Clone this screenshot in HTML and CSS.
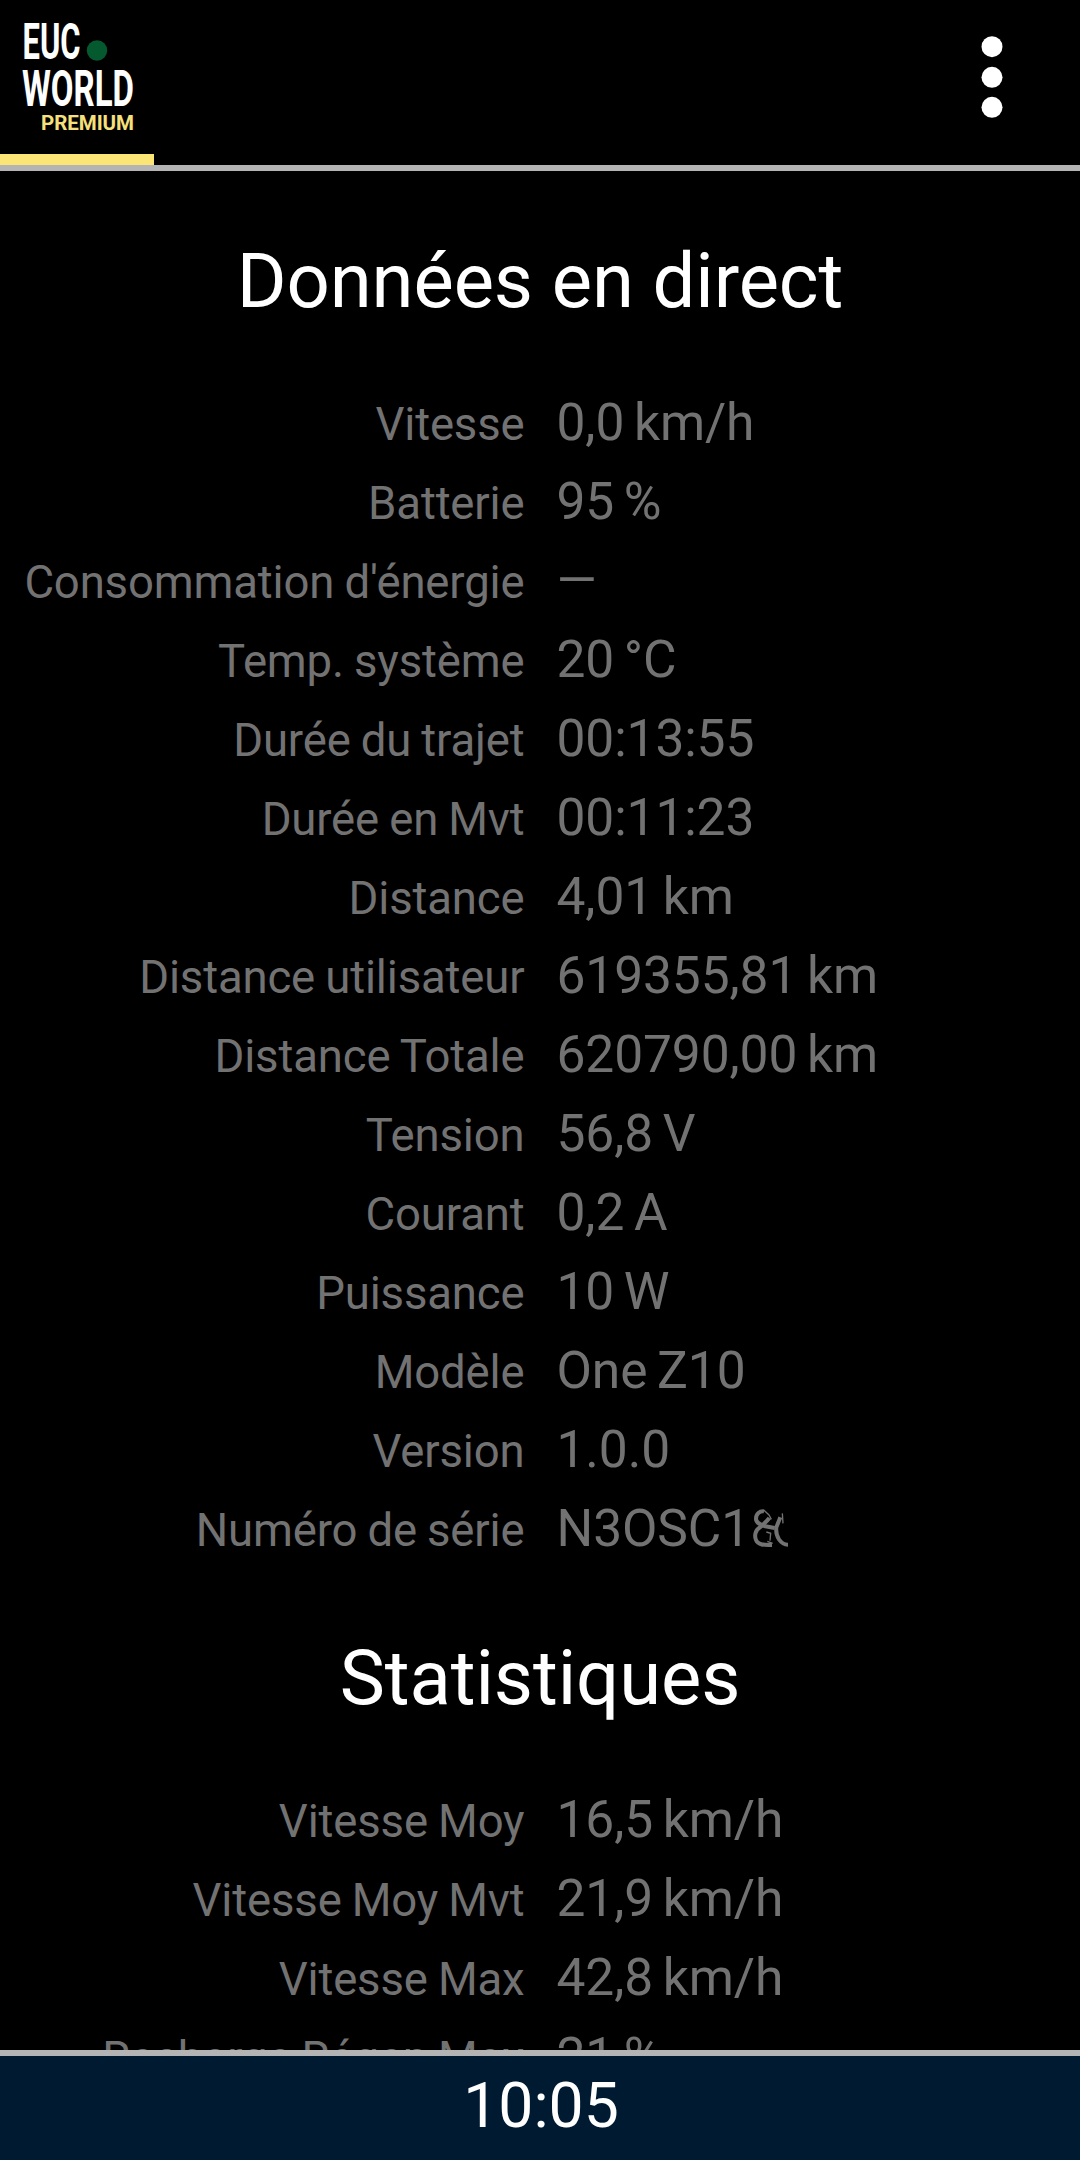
FILE: index.html
```
<!DOCTYPE html>
<html lang="fr">
<head>
    <meta charset="UTF-8">
    <title>EUC World</title>
    <link rel="stylesheet" href="styles.css">
</head>
<body>
<header class="topbar">
    <svg class="logo" width="154" height="154" viewBox="0 0 154 154">
        <text class="logo-name" x="22.5" y="59" textLength="58" lengthAdjust="spacingAndGlyphs">EUC</text>
        <circle cx="97" cy="50.5" r="10.2" fill="#05592f"/>
        <text class="logo-name" x="22" y="106" textLength="112" lengthAdjust="spacingAndGlyphs">WORLD</text>
        <text class="logo-premium" x="41" y="130" textLength="93" lengthAdjust="spacing">PREMIUM</text>
    </svg>
    <div class="tab-line"></div>
    <svg class="menu" width="24" height="84" viewBox="0 0 24 84">
        <circle cx="12" cy="11.7" r="10.5"/>
        <circle cx="12" cy="42.3" r="10.5"/>
        <circle cx="12" cy="72.3" r="10.5"/>
    </svg>
</header>
<main class="content">
    <h2>Données en direct</h2>
    <ul class="list">
        <li><span class="label">Vitesse</span><span class="value">0,0 km/h</span></li>
        <li><span class="label">Batterie</span><span class="value">95 %</span></li>
        <li><span class="label">Consommation d'énergie</span><span class="value">—</span></li>
        <li><span class="label">Temp. système</span><span class="value">20 °C</span></li>
        <li><span class="label">Durée du trajet</span><span class="value">00:13:55</span></li>
        <li><span class="label">Durée en Mvt</span><span class="value">00:11:23</span></li>
        <li><span class="label">Distance</span><span class="value">4,01 km</span></li>
        <li><span class="label">Distance utilisateur</span><span class="value">619355,81 km</span></li>
        <li><span class="label">Distance Totale</span><span class="value">620790,00 km</span></li>
        <li><span class="label">Tension</span><span class="value">56,8 V</span></li>
        <li><span class="label">Courant</span><span class="value">0,2 A</span></li>
        <li><span class="label">Puissance</span><span class="value">10 W</span></li>
        <li><span class="label">Modèle</span><span class="value">One Z10</span></li>
        <li><span class="label">Version</span><span class="value">1.0.0</span></li>
        <li>
            <span class="label">Numéro de série</span>
            <!-- end of the serial number is scrubbed out -->
            <span class="value">N3OSC1<svg class="scrub" width="40" height="42" viewBox="90 21 120 126">
                <path d="M126 34C113 32 102 42 102 56C102 69 116 74 130 79L158 84"/>
                <path d="M142 54C134 65 124 73 114 82C99 91 97 108 102 120C108 135 126 136 150 135"/>
                <path d="M175 52L163 82C160 110 176 134 198 134"/>
                <path class="thin" d="M126 31L141 45L148 58M181 40L183 70M133 96L146 100L144 122M136 124L152 130"/>
            </svg></span>
        </li>
    </ul>
    <h2>Statistiques</h2>
    <ul class="list">
        <li><span class="label">Vitesse Moy</span><span class="value">16,5 km/h</span></li>
        <li><span class="label">Vitesse Moy Mvt</span><span class="value">21,9 km/h</span></li>
        <li><span class="label">Vitesse Max</span><span class="value">42,8 km/h</span></li>
        <li><span class="label">Recharge Régen Max</span><span class="value">21 %</span></li>
    </ul>
</main>
<footer class="clock">10:05</footer>
</body>
</html>
```
FILE: styles.css
```
body,ul,h2 {
    margin: 0; padding: 0;
}
li {
    list-style: none;
}
body {
    width: 1080px;height: 2160px;overflow: hidden;
    display: flex;flex-direction: column;
    background: #000;color: #fff;
    font-family: Roboto, sans-serif;
}
.topbar {
    box-sizing: border-box;height: 171px;flex: none;
    display: grid;grid-template-columns: 154px 1fr;grid-template-rows: 154px 11px;
    border-bottom: 6px solid #b4b4b4;
}
.logo-name {
    font-size: 50px;font-weight: 700;fill: #fff;
}
.logo-premium {
    font-size: 20.5px;font-weight: 700;fill: #f6e07c;
}
.tab-line {
    grid-row: 2;background: #fae575;
}
.menu {
    grid-column: 2;grid-row: 1;justify-self: end;
    margin: 35px 76px 0 0;fill: #fff;
}
.content {
    height: 1879px;flex: none;overflow: hidden;
    display: flex;flex-direction: column;
}
h2 {
    margin: 65px 0 57px;
    font-size: 76px;font-weight: 400;line-height: 90px;text-align: center;
    letter-spacing: -0.1px;
}
.list li {
    display: grid;grid-template-columns: 524.5px 1fr;column-gap: 32px;
    align-items: baseline;
    height: 79px;line-height: 79px;color: #727272;white-space: nowrap;
}
.label {
    font-size: 45.5px;text-align: right;
    letter-spacing: -0.15px;word-spacing: -1px;
}
.value {
    font-size: 51.5px;
    letter-spacing: -0.1px;word-spacing: -3px;
}
.scrub {
    margin-left: 2px;vertical-align: -3px;
    fill: none;stroke: #727272;stroke-width: 12;
}
.scrub .thin {
    stroke-width: 4;
}
.clock {
    box-sizing: border-box;height: 110px;flex: none;
    padding-left: 2px;
    border-top: 6px solid #b4b4b4;background: #001a31;
    font-size: 62.5px;line-height: 100px;text-align: center;
}
```
